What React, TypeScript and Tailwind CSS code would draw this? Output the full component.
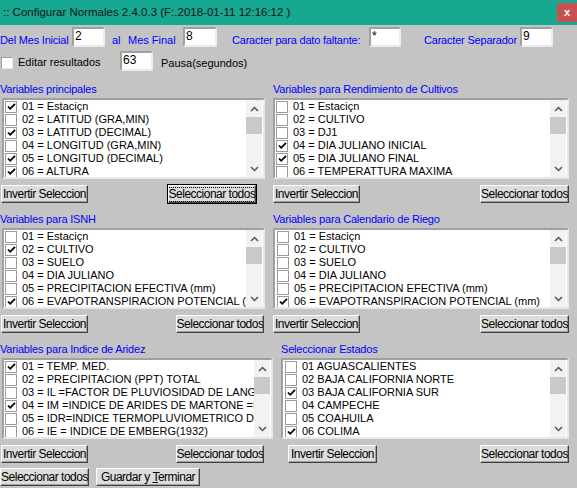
import React from 'react';

type Item = { label: string; checked: boolean };

const mk = (labels: string[], checked: number[]): Item[] =>
  labels.map((label, i) => ({ label, checked: checked.includes(i) }));

const principales = mk(
  ['01 = Estaciçn', '02 = LATITUD (GRA,MIN)', '03 = LATITUD (DECIMAL)', '04 = LONGITUD (GRA,MIN)', '05 = LONGITUD (DECIMAL)', '06 = ALTURA'],
  [0, 2, 4, 5]
);
const cultivos = mk(
  ['01 = Estaciçn', '02 = CULTIVO', '03 = DJ1', '04 = DIA JULIANO INICIAL', '05 = DIA JULIANO FINAL', '06 = TEMPERATTURA MAXIMA'],
  [3, 4]
);
const isnh = mk(
  ['01 = Estaciçn', '02 = CULTIVO', '03 = SUELO', '04 = DIA JULIANO', '05 = PRECIPITACION EFECTIVA (mm)', '06 = EVAPOTRANSPIRACION POTENCIAL (mm)'],
  [1, 5]
);
const riego = mk(
  ['01 = Estaciçn', '02 = CULTIVO', '03 = SUELO', '04 = DIA JULIANO', '05 = PRECIPITACION EFECTIVA (mm)', '06 = EVAPOTRANSPIRACION POTENCIAL (mm)'],
  [5]
);
const aridez = mk(
  ['01 = TEMP. MED.', '02 = PRECIPITACION (PPT) TOTAL', '03 = IL =FACTOR DE PLUVIOSIDAD DE LANG=', '04 = IM =INDICE DE ARIDES DE MARTONE =P.', '05 = IDR=INDICE TERMOPLUVIOMETRICO DE', '06 = IE = INDICE DE EMBERG(1932)'],
  [0, 3]
);
const estados = mk(
  ['01 AGUASCALIENTES', '02 BAJA CALIFORNIA NORTE', '03 BAJA CALIFORNIA SUR', '04 CAMPECHE', '05 COAHUILA', '06 COLIMA'],
  [2, 5]
);

const CheckMark = () => (
  <svg width="9" height="9" viewBox="0 0 9 9" className="block">
    <path d="M1 4.5 L3.2 6.8 L8 1.8" fill="none" stroke="#000" strokeWidth="1.8" />
  </svg>
);

const Chevron = ({ up }: { up?: boolean }) => (
  <svg width="9" height="6" viewBox="0 0 9 6" className="block">
    <path d={up ? 'M1 5 L4.5 1.5 L8 5' : 'M1 1 L4.5 4.5 L8 1'} fill="none" stroke="#555" strokeWidth="1.5" />
  </svg>
);

function CheckBox({ checked }: { checked: boolean }) {
  return (
    <div className="w-[12px] h-[12px] shrink-0 bg-white border border-[#9a9a9a] flex items-center justify-center">
      {checked && <CheckMark />}
    </div>
  );
}

function ListBox({ items, w, indent = 'pl-[1px]' }: { items: Item[]; w: string; indent?: string }) {
  return (
    <div className={`${w} h-[81px] bg-white border-2 border-t-[#a0a0a0] border-l-[#a0a0a0] border-r-[#e8e8e8] border-b-[#e8e8e8] flex`}>
      <div className={`flex-1 overflow-hidden ${indent}`}>
        {items.map((it) => (
          <div key={it.label} className="h-[13px] flex items-center gap-[5px] whitespace-nowrap text-[11px] leading-[13px] text-black">
            <CheckBox checked={it.checked} />
            <span>{it.label}</span>
          </div>
        ))}
      </div>
      <div className="w-[16px] bg-[#f2f2f2] flex flex-col mr-[1px]">
        <div className="h-[17px] flex items-center justify-center">
          <Chevron up />
        </div>
        <div className="h-[17px] bg-[#c9c9c9]" />
        <div className="flex-1" />
        <div className="h-[16px] flex items-center justify-center">
          <Chevron />
        </div>
      </div>
    </div>
  );
}

function Btn({ children, w, focused }: { children: React.ReactNode; w: string; focused?: boolean }) {
  return (
    <div
      className={`${w} h-[18px] bg-[#dcdcdc] border border-t-white border-l-white border-r-[#404040] border-b-[#404040] shadow-[inset_-1px_-1px_0_#a0a0a0] flex items-center justify-center text-[12px] tracking-[-0.5px] text-black whitespace-nowrap overflow-hidden ${focused ? 'outline outline-1 outline-black' : ''}`}
    >
      {focused ? (
        <span className="border border-dotted border-black leading-[13px]">{children}</span>
      ) : (
        children
      )}
    </div>
  );
}

const Label = ({ children }: { children: React.ReactNode }) => (
  <div className="h-[16px] text-[11px] leading-[16px] text-[#0000ff] tracking-[-0.2px] whitespace-nowrap">{children}</div>
);

const Field = ({ value, w }: { value: string; w: string }) => (
  <div className={`${w} h-[20px] bg-white border-2 border-t-[#a0a0a0] border-l-[#a0a0a0] border-r-[#ececec] border-b-[#ececec] text-[12px] leading-[14px] pl-[1px] text-black`}>
    {value}
  </div>
);

export default function App() {
  return (
    <div className="w-[577px] h-[488px] bg-[#c4c4c4] font-['Liberation_Sans',Arial,sans-serif] overflow-hidden">
      {/* title bar */}
      <div className="h-[25px] bg-[#16a890] flex items-center justify-between">
        <span className="pl-[3px] pt-[1px] text-[11.5px] text-[#141414] whitespace-nowrap">
          :: Configurar Normales 2.4.0.3 (F:.2018-01-11 12:16:12 )
        </span>
        <div className="w-[20px] h-[19px] bg-[#c75050] text-white text-[11px] font-bold flex items-center justify-center mb-[3px] mt-[3px]">
          x
        </div>
      </div>

      {/* row 1 */}
      <div className="h-[20px] mt-[2px] flex items-end text-[11px] text-[#0000ff] whitespace-nowrap">
        <span className="w-[72px] tracking-[-0.2px] leading-[14px]">Del Mes Inicial</span>
        <Field value="2" w="w-[33px]" />
        <span className="w-[23px] pl-[7px] leading-[14px]">al</span>
        <span className="w-[55px] leading-[14px]">Mes Final</span>
        <Field value="8" w="w-[34px]" />
        <span className="w-[152px] pl-[15px] leading-[14px] tracking-[-0.2px]">Caracter para dato faltante:</span>
        <Field value="*" w="w-[32px]" />
        <span className="w-[23px]" />
        <span className="w-[96px] leading-[14px] tracking-[-0.2px]">Caracter Separador</span>
        <Field value="9" w="w-[33px]" />
      </div>

      {/* row 2 */}
      <div className="h-[21px] mt-[3px] flex items-center text-[11px] whitespace-nowrap">
        <div className="ml-[1px] mt-[5px] w-[12px] h-[12px] bg-white border border-t-[#a0a0a0] border-l-[#a0a0a0] border-r-[#e8e8e8] border-b-[#e8e8e8]" />
        <span className="ml-[5px] w-[102px] mt-[4px] text-black">Editar resultados</span>
        <Field value="63" w="w-[33px]" />
        <span className="ml-[8px] mt-[6px] text-black">Pausa(segundos)</span>
      </div>

      {/* section 1 */}
      <div className="mt-[10px] flex">
        <div className="w-[273px]">
          <Label>Variables principales</Label>
          <div className="ml-[2px] mt-[1px]">
            <ListBox items={principales} w="w-[263px]" />
          </div>
          <div className="flex mt-[6px] ml-[1px]">
            <Btn w="w-[87px]">Invertir Seleccion</Btn>
            <div className="ml-[80px]">
              <Btn w="w-[88px]" focused>
                Seleccionar todos
              </Btn>
            </div>
          </div>
        </div>
        <div className="w-[296px]">
          <Label>Variables para Rendimiento de Cultivos</Label>
          <div className="mt-[1px]">
            <ListBox items={cultivos} w="w-[296px]" />
          </div>
          <div className="flex justify-between mt-[6px]">
            <Btn w="w-[87px]">Invertir Seleccion</Btn>
            <Btn w="w-[89px]">Seleccionar todos</Btn>
          </div>
        </div>
      </div>

      {/* section 2 */}
      <div className="mt-[8px] flex">
        <div className="w-[273px]">
          <Label>Variables para ISNH</Label>
          <div className="ml-[2px] mt-[1px]">
            <ListBox items={isnh} w="w-[263px]" />
          </div>
          <div className="flex mt-[6px] ml-[1px]">
            <Btn w="w-[87px]">Invertir Seleccion</Btn>
            <div className="ml-[88px]">
              <Btn w="w-[88px]">Seleccionar todos</Btn>
            </div>
          </div>
        </div>
        <div className="w-[296px]">
          <Label>Variables para Calendario de Riego</Label>
          <div className="mt-[1px]">
            <ListBox items={riego} w="w-[296px]" indent="pl-[2px]" />
          </div>
          <div className="flex justify-between mt-[6px]">
            <Btn w="w-[87px]">Invertir Seleccion</Btn>
            <Btn w="w-[89px]">Seleccionar todos</Btn>
          </div>
        </div>
      </div>

      {/* section 3 */}
      <div className="mt-[8px] flex">
        <div className="w-[281px]">
          <Label>Variables para Indice de Aridez</Label>
          <div className="ml-[2px] mt-[1px]">
            <ListBox items={aridez} w="w-[271px]" />
          </div>
          <div className="flex mt-[6px] ml-[1px]">
            <Btn w="w-[87px]">Invertir Seleccion</Btn>
            <div className="ml-[88px]">
              <Btn w="w-[88px]">Seleccionar todos</Btn>
            </div>
          </div>
        </div>
        <div className="w-[288px]">
          <Label>Seleccionar Estados</Label>
          <div className="mt-[1px]">
            <ListBox items={estados} w="w-[288px]" indent="pl-[2px]" />
          </div>
          <div className="flex justify-between mt-[6px]">
            <div className="ml-[7px]">
              <Btn w="w-[89px]">Invertir Seleccion</Btn>
            </div>
            <Btn w="w-[89px]">Seleccionar todos</Btn>
          </div>
        </div>
      </div>

      {/* bottom */}
      <div className="mt-[5px] flex gap-[7px]">
        <Btn w="w-[89px]">Seleccionar todos</Btn>
        <Btn w="w-[104px]">
          <span>
            Guardar y <span className="underline">T</span>erminar
          </span>
        </Btn>
      </div>
    </div>
  );
}
